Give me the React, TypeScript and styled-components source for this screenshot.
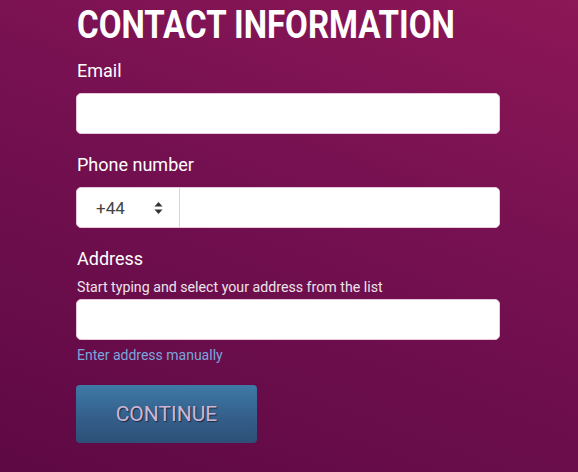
import React from "react";
import styled, { createGlobalStyle } from "styled-components";

const GlobalStyle = createGlobalStyle`
    html, body {
        margin: 0;
        padding: 0;
    }
    body {
        font-family: "Roboto", "Noto Sans", sans-serif;
    }
`;

const Page = styled.div`
    width: 578px;
    height: 472px;
    overflow: hidden;
    box-sizing: border-box;
    padding: 4px 0 0 76px;
    background: linear-gradient(200deg, #8d1757 0%, #741050 45%, #5e0944 100%);
`;

const Form = styled.div`
    width: 424px;
    display: flex;
    flex-direction: column;
`;

const Title = styled.h1`
    margin: 0 0 0 1px;
    font-family: "Roboto", sans-serif;
    font-weight: 700;
    font-size: 38px;
    line-height: 42px;
    color: #ffffff;
    white-space: nowrap;
    transform: scaleX(0.87);
    transform-origin: left center;
`;

const Field = styled.div<{ $top: number }>`
    display: flex;
    flex-direction: column;
    margin-top: ${(p) => p.$top}px;
`;

const Label = styled.label`
    margin-left: 1px;
    font-size: 18px;
    line-height: 22px;
    color: #ffffff;
`;

const Hint = styled.div`
    margin: 9px 0 0 1px;
    font-size: 14.2px;
    line-height: 17px;
    color: #ece3ea;
`;

const Input = styled.input<{ $top: number }>`
    box-sizing: border-box;
    height: 41px;
    width: 100%;
    margin-top: ${(p) => p.$top}px;
    border: 1px solid #e8c9dc;
    border-radius: 5px;
    background: #ffffff;
    outline: none;
    padding: 0 12px;
    font-size: 16px;
`;

const PhoneRow = styled.div`
    display: flex;
    height: 41px;
    margin-top: 11px;
    box-sizing: border-box;
    border: 1px solid #e8c9dc;
    border-radius: 5px;
    background: #ffffff;
    overflow: hidden;
`;

const CodeSelect = styled.div`
    width: 103px;
    display: flex;
    align-items: center;
    justify-content: space-between;
    padding: 0 16px 0 19px;
    box-sizing: border-box;
    border-right: 1px solid #d6d6d6;
    font-family: "Roboto", sans-serif;
    font-size: 17px;
    color: #444444;
`;

const PhoneInput = styled.input`
    flex: 1;
    border: none;
    outline: none;
    padding: 0 12px;
    font-size: 16px;
`;

const ManualLink = styled.a`
    margin: 7px 0 0 1px;
    font-size: 14px;
    line-height: 17px;
    color: #79a6dc;
    text-decoration: none;
    cursor: pointer;
`;

const ContinueButton = styled.button`
    margin-top: 21px;
    width: 181px;
    height: 58px;
    border: none;
    border-radius: 4px;
    background: linear-gradient(to bottom, #3f7aa6 0%, #345f8b 55%, #2d4f77 100%);
    font-family: "Roboto", sans-serif;
    font-size: 21px;
    color: #cdb6d4;
    text-shadow: 1px 1px 1px #1c2a44;
    cursor: pointer;
`;

const SortArrows = () => (
    <svg width="9" height="14" viewBox="0 0 9 14">
        <path d="M4.5 1 L8.5 5.5 H0.5 Z" fill="#333" />
        <path d="M4.5 13 L8.5 8.5 H0.5 Z" fill="#333" />
    </svg>
);

const App: React.FC = () => {
    return (
        <Page>
            <GlobalStyle />
            <Form>
                <Title>CONTACT INFORMATION</Title>
                <Field $top={14}>
                    <Label>Email</Label>
                    <Input $top={11} type="email" />
                </Field>
                <Field $top={20}>
                    <Label>Phone number</Label>
                    <PhoneRow>
                        <CodeSelect>
                            <span>+44</span>
                            <SortArrows />
                        </CodeSelect>
                        <PhoneInput type="tel" />
                    </PhoneRow>
                </Field>
                <Field $top={20}>
                    <Label>Address</Label>
                    <Hint>Start typing and select your address from the list</Hint>
                    <Input $top={3} type="text" />
                    <ManualLink>Enter address manually</ManualLink>
                </Field>
                <ContinueButton>CONTINUE</ContinueButton>
            </Form>
        </Page>
    );
};

export default App;
